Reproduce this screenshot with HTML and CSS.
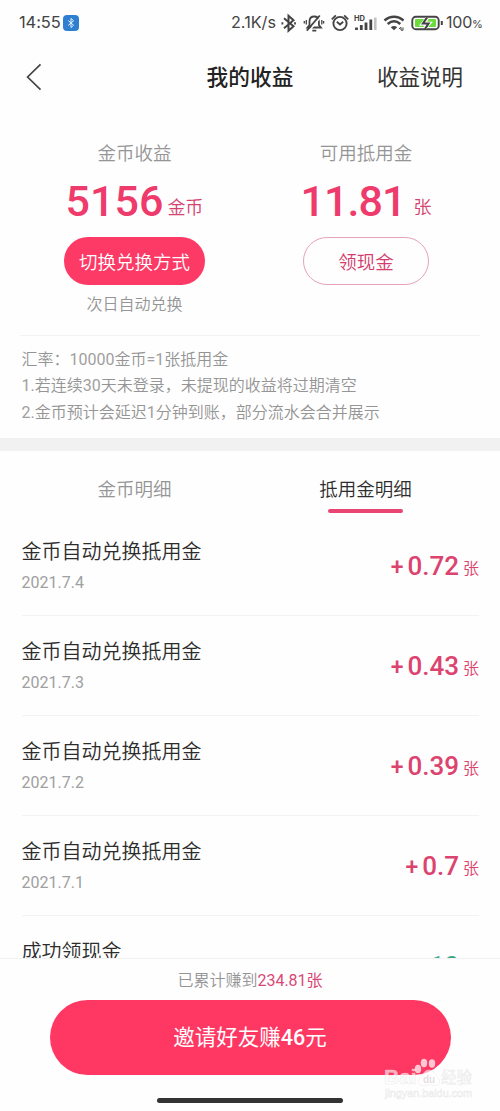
FILE: index.html
```html
<!DOCTYPE html>
<html lang="zh-CN">
<head>
<meta charset="utf-8">
<title>我的收益</title>
<link rel="stylesheet" href="styles.css">
</head>
<body>
<div class="screen">
  <div class="status">
    <span class="clock">14:55</span>
    <svg class="bt-app" width="16" height="16" viewBox="0 0 16 16"><rect width="16" height="16" rx="4" fill="#2f7fd0"/><path d="M5.2 5.6l5.4 4.6L8 12.6V3.4l2.6 2.4-5.4 4.6" fill="none" stroke="#e4f2ff" stroke-width="1"/></svg>
    <span class="speed">2.1K/s</span>
    <svg class="status-icons" width="164" height="24" viewBox="280 10 164 24" fill="none" stroke="#444" stroke-width="1.6">
      <path d="M283.5 17.5l9.5 8-5 4.500v-15l5 4.500-9.500 8" transform="translate(.5 -.2)" stroke-width="2"/>
      <path d="M281.500 22.300h1.800M294.100 22.300h1.800" stroke-width="2.200"/>
      <path d="M307.500 26.500l2-2.500v-3.500c0-3.500 2-5 4.700-5s4.700 1.500 4.700 5v3.500l2 2.500zM312.300 29.700h4" stroke-width="1.800"/>
      <path d="M321.300 15.200l-12 14.600" stroke="#fff" stroke-width="1.500"/>
      <path d="M319.800 14.500l-13 15.200" stroke-width="1.800"/>
      <path d="M306.300 19v4.500M304.300 20v2.500M321.800 19v4.500M323.600 20v2.500" stroke-width="1.300"/>
      <circle cx="340" cy="22.500" r="6.600" stroke-width="1.900"/>
      <path d="M336.800 20.800l3.200 2.700 3.200-2.700M331.800 18.300l4-4M348.200 18.300l-4-4" stroke-width="1.800"/>
      <path d="M356.500 26.500v2.500M361.300 24v5M366 21.500v7.500M370.800 18.500v10.500" stroke-width="2.800"/>
      <path d="M375.300 16.500v12.500" stroke="#c2c2c2" stroke-width="2.600"/>
      <path d="M384.500 19.500c5.700-5 13.300-5 19 0M387.700 23c3.900-3.400 8.700-3.400 12.600 0" stroke-width="2.500"/>
      <path d="M390.800 26.300c2-1.700 4.400-1.700 6.400 0l-3.200 3z" fill="#444" stroke="none"/>
      <path d="M399 27.800l2-1.400v2.800h2v-2.800" stroke-width="1"/>
      <rect x="412.300" y="15.800" width="26.400" height="12.400" rx="3.500" stroke-width="1.900"/>
      <rect x="415" y="18" width="21" height="8" rx="1" fill="#6bdc3c" stroke="none"/>
      <path d="M427 17.500l-4 5.300h5.500l-3.500 4" stroke="#fff" stroke-width="4"/>
      <path d="M427 16.500l-4 6h5.500l-3.500 5.500" stroke-width="2.200"/>
      <path d="M441.800 20v4" stroke-width="2"/>
      <text x="354" y="19.500" class="hd">HD</text>
    </svg>
    <span class="battery">100<small>%</small></span>
  </div>

  <div class="nav">
    <svg class="back" width="16" height="28" viewBox="0 0 16 28"><path d="M14.500 1.300L1.600 14l12.900 12.700" fill="none" stroke="#444" stroke-width="1.700"/></svg>
    <h1 class="title">我的收益</h1>
    <span class="help">收益说明</span>
  </div>

  <div class="summary">
    <div class="balance coins">
      <div class="label">金币收益</div>
      <div class="figure">5156<span class="unit">金币</span></div>
      <div class="pill solid">切换兑换方式</div>
      <div class="hint">次日自动兑换</div>
    </div>
    <div class="balance vouchers">
      <div class="label">可用抵用金</div>
      <div class="figure">11.81<span class="unit">张</span></div>
      <div class="pill outline">领现金</div>
    </div>
  </div>

  <div class="notes">
    <p>汇率：<span class="num">10000</span>金币<span class="num">=1</span>张抵用金</p>
    <p><span class="num">1.</span>若连续<span class="num">30</span>天未登录，未提现的收益将过期清空</p>
    <p><span class="num">2.</span>金币预计会延迟<span class="num">1</span>分钟到账，部分流水会合并展示</p>
  </div>
  <div class="band"></div>

  <div class="tabs">
    <div class="tab">金币明细</div>
    <div class="tab active">抵用金明细</div>
  </div>

  <div class="list">
    <div class="row"><div><div class="name">金币自动兑换抵用金</div><div class="date">2021.7.4</div></div><div class="amount"><i>+</i>0.72<span>张</span></div></div>
    <div class="row"><div><div class="name">金币自动兑换抵用金</div><div class="date">2021.7.3</div></div><div class="amount"><i>+</i>0.43<span>张</span></div></div>
    <div class="row"><div><div class="name">金币自动兑换抵用金</div><div class="date">2021.7.2</div></div><div class="amount"><i>+</i>0.39<span>张</span></div></div>
    <div class="row"><div><div class="name">金币自动兑换抵用金</div><div class="date">2021.7.1</div></div><div class="amount"><i>+</i>0.7<span>张</span></div></div>
    <div class="row"><div><div class="name">成功领现金</div></div><div class="amount spent"><i>-</i>10<span>张</span></div></div>
  </div>

  <div class="footer">
    <div class="total">已累计赚到<b>234.81张</b></div>
    <div class="invite">邀请好友赚<b>46</b>元</div>
    <div class="home"></div>
    <div class="watermark">
      <svg width="94" height="48" viewBox="0 0 94 48">
        <g class="mark">
          <text x="0" y="28" class="wm-bai">Bai</text>
          <path d="M45 14c5 0 6 5 9 8 3 4 1 8-4 7.500-3.500-.7-6.500-.7-10 0-5 .5-7-3.500-4-7.500 3-3 4-8 9-8z"/>
          <text x="57" y="27" class="wm-cn">经验</text>
          <text x="1" y="40.500" class="wm-url">jingyan.baidu.com</text>
        </g>
        <g fill="#fff" fill-opacity=".72"><ellipse cx="34" cy="13" rx="3.200" ry="4.200"/><ellipse cx="40" cy="7" rx="3.200" ry="4.200"/><ellipse cx="48" cy="7.500" rx="3.200" ry="4.200"/></g>
        <text x="39" y="27" class="wm-du">du</text>
      </svg>
    </div>
  </div>
</div>
</body>
</html>
```
FILE: styles.css
```css
* { box-sizing: border-box; }
body { margin: 0; background: #fff; font-family: Roboto, "Noto Sans CJK SC", sans-serif; color: #333; }
.screen { width: 500px; height: 1111px; display: flex; flex-direction: column; overflow: hidden; background: #fefefe; }

.status { flex: none; height: 45px; padding: 0 17px 0 19px; display: flex; align-items: center; font: 400 16.5px/45px Inter, sans-serif; color: #444; }
.clock { width: 44px; letter-spacing: -.1px; }
.speed { margin-left: auto; width: 49px; font-size: 16.2px; white-space: nowrap; }
.status-icons { flex: none; }
.hd { font: 700 7.5px Inter, sans-serif; fill: #444; stroke: none; }
.battery { width: 37px; margin-left: 2px; font-size: 16px; white-space: nowrap; letter-spacing: -.2px; }
.battery small { font-size: 11px; line-height: 1; }

.nav { flex: none; height: 64px; padding: 2px 37px 0 26px; display: grid; grid-template-columns: 96px 1fr 96px; align-items: center; line-height: 32px; }
.back { margin-top: -2px; }
.title { margin: 0; padding-left: 11px; text-align: center; font-size: 21.7px; font-weight: 500; color: #222; }
.help { justify-self: end; font-size: 21.5px; color: #333; white-space: nowrap; }

.summary { flex: none; height: 227px; margin: 0 20px; padding-top: 30px; display: grid; grid-template-columns: 229px 1fr; border-bottom: 1px solid #f3f3f3; }
.balance { display: flex; flex-direction: column; align-items: center; }
.vouchers { margin-left: 3px; width: 228px; }
.vouchers .figure { letter-spacing: -.9px; }
.vouchers .unit { margin-left: 8px; letter-spacing: 0; }
.label { height: 30px; line-height: 30px; font-size: 18.5px; font-weight: 350; color: #959595; }
.figure { height: 68px; line-height: 65px; display: flex; align-items: baseline; font-size: 43px; font-weight: 500; color: #ef3a6c; }
.unit { margin-left: 4px; line-height: 1; padding-bottom: 2px; transform: translateY(-2px); font-size: 18px; font-weight: 350; color: #d4426f; }
.pill { height: 48px; padding-top: 2px; line-height: 48px; border-radius: 24px; font-size: 18.5px; font-weight: 350; text-align: center; }
.solid { width: 141px; background: #fd3966; color: #fff; }
.outline { width: 126px; border: 1.5px solid #e7a2b5; line-height: 46px; color: #d43c6d; }
.hint { line-height: 39px; font-size: 16px; font-weight: 350; color: #959595; }

.notes { flex: none; height: 102px; padding: 11px 22px 0; font-size: 16px; line-height: 26.4px; font-weight: 350; color: #959595; }
.notes p { margin: 0 0 0 -.5px; white-space: nowrap; }
.num { font-weight: 400; color: #a0a0a0; }
.band { flex: none; height: 13px; background: #f1f1f1; }

.tabs { flex: none; height: 65px; padding: 0 19px; display: grid; grid-template-columns: 231px 231px; }
.tab { display: flex; flex-direction: column; align-items: center; padding-top: 24px; line-height: 30px; font-size: 18.5px; font-weight: 350; color: #959595; }
.active { color: #2c2c2c; }
.active::after { content: ""; margin-top: 4px; width: 75px; height: 4px; border-radius: 2px; background: #e84572; }

.list { flex: 1; min-height: 0; overflow: hidden; padding: 0 21px 0 21.5px; }
.row { height: 100px; display: flex; justify-content: space-between; padding-top: 20px; border-bottom: 1px solid #f3f3f3; }
.name { line-height: 32px; font-size: 20px; font-weight: 350; color: #2c2c2c; }
.date { line-height: 30px; font-size: 16px; color: #a0a0a0; }
.amount { display: flex; align-items: baseline; height: 60px; line-height: 60px; font-size: 26px; font-weight: 500; color: #dc436f; }
.amount i { margin-right: 4px; font-style: normal; font-size: 23px; }
.amount span { margin-left: 4px; font-size: 16px; font-weight: 350; transform: translateY(-1px); }
.amount.spent { color: #3aa982; }

.footer { position: relative; flex: none; height: 153px; display: flex; flex-direction: column; align-items: center; border-top: 1px solid #f1f1f1; background: #fefefe; }
.total { height: 41px; line-height: 44px; font-size: 16px; font-weight: 350; color: #959595; }
.total b { font-weight: 400; color: #d94877; }
.invite { width: 401px; height: 75px; line-height: 75px; border-radius: 38px; background: #ff3763; color: #fff; text-align: center; font-size: 21.5px; }
.invite b { font-weight: 500; }
.home { margin-top: 23px; width: 186px; height: 5px; border-radius: 3px; background: #333; }
.watermark { position: absolute; left: 384px; top: 97px; height: 48px; }
.mark { fill: #fff; fill-opacity: .6; stroke: #ddd; stroke-opacity: .6; stroke-width: .6; }
.wm-bai { font: 700 21px "Liberation Sans", sans-serif; }
.wm-cn { font: 400 15.5px/1 "Noto Sans CJK SC", sans-serif; }
.wm-url { font: 400 10.8px "Liberation Sans", sans-serif; }
.wm-du { font: 700 10px "Liberation Sans", sans-serif; fill: #e6e0e2; }
```
